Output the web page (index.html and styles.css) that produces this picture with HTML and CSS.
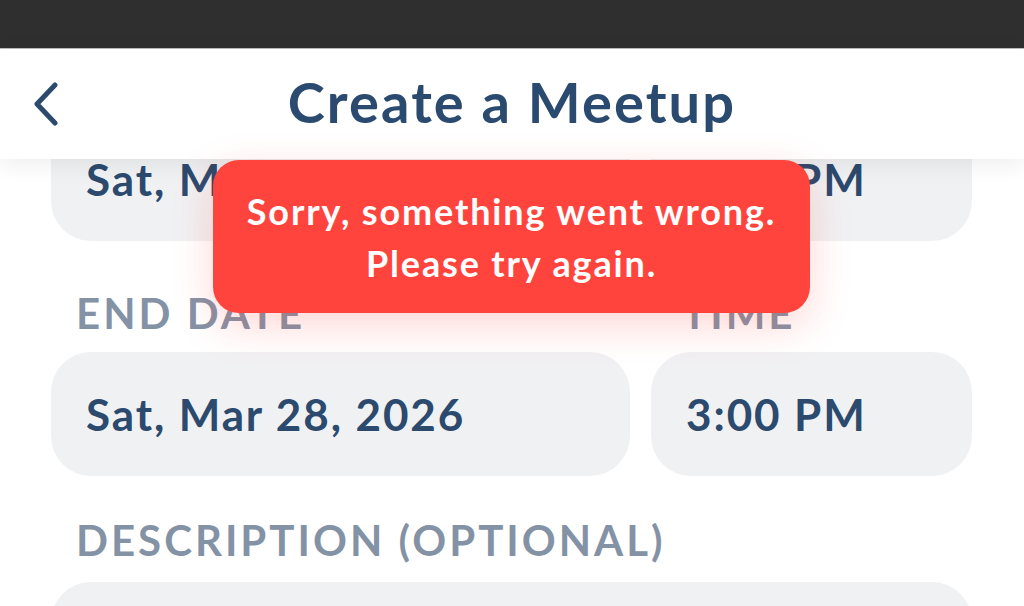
FILE: index.html
```html
<!DOCTYPE html>
<html lang="en">
<head>
<meta charset="utf-8">
<title>Create a Meetup</title>
<link rel="stylesheet" href="styles.css">
</head>
<body>
<div class="screen">
  <div class="status-bar"></div>
  <header class="app-header">
    <button class="back" aria-label="Back">
      <svg width="30" height="48" viewBox="0 0 30 48"><polyline points="21,3 3,22 21,41" fill="none" stroke="#2c4a6e" stroke-width="5" stroke-linecap="round" stroke-linejoin="round"/></svg>
    </button>
    <h1 class="title">Create a Meetup</h1>
  </header>
  <main class="scroll">
    <form class="form">
      <div class="row">
        <div class="field field-date">Sat, Mar 28, 2026</div>
        <div class="field field-time">1:00 PM</div>
      </div>
      <div class="row labels">
        <div class="label label-date">END DATE</div>
        <div class="label label-time">TIME</div>
      </div>
      <div class="row">
        <div class="field field-date">Sat, Mar 28, 2026</div>
        <div class="field field-time">3:00 PM</div>
      </div>
      <div class="label label-desc">DESCRIPTION (OPTIONAL)</div>
      <div class="field field-desc"></div>
    </form>
  </main>
  <div class="toast" role="alert">Sorry, something went wrong.<br>Please try again.</div>
</div>
</body>
</html>
```
FILE: styles.css
```css
* { box-sizing: border-box; }
html, body { margin: 0; padding: 0; }
body {
  width: 1024px;
  height: 606px;
  overflow: hidden;
  background: #ffffff;
  font-family: "Lato", "Noto Sans", sans-serif;
  color: #2c4a6e;
}
.screen {
  position: relative;
  width: 1024px;
  height: 606px;
  overflow: hidden;
  display: flex;
  flex-direction: column;
}
.status-bar {
  height: 49px;
  background: #2f2f2f;
  flex: none;
  border-bottom: 1px solid #bdbdbd;
}
.app-header {
  position: relative;
  z-index: 2;
  height: 110px;
  flex: none;
  background: #ffffff;
  display: flex;
  align-items: center;
  justify-content: center;
  box-shadow: 0 6px 22px rgba(0, 0, 0, 0.07);
}
.back {
  position: absolute;
  left: 34px;
  top: 33px;
  background: none;
  border: 0;
  padding: 0;
  width: 30px;
  height: 48px;
}
.back svg { display: block; }
.title {
  margin: 0;
  font-size: 56px;
  font-weight: 700;
  color: #2b4a6f;
  letter-spacing: 2.1px;
  line-height: 1;
  transform: translateY(-2px);
}
.scroll {
  flex: 1;
  overflow: hidden;
  position: relative;
  z-index: 1;
}
.form {
  margin-top: -42px;
  padding: 0 52px 0 51px;
}
.row {
  display: flex;
  gap: 21px;
}
.field {
  height: 124px;
  border-radius: 40px;
  background: #f0f1f3;
  display: flex;
  align-items: center;
  padding-left: 35px;
  font-size: 44px;
  font-weight: 700;
  color: #2c4a6e;
  letter-spacing: 1.9px;
}
.field-date { width: 579px; flex: none; }
.field-time { flex: 1; }
.labels { margin-top: 47px; margin-bottom: 14px; }
.label {
  font-size: 42px;
  line-height: 50px;
  font-weight: 700;
  color: #8492a6;
  padding-left: 25px;
  letter-spacing: 3px;
}
.label-date { width: 579px; flex: none; }
.label-time { padding-left: 31px; }
.label-desc { margin-top: 39px; margin-bottom: 17px; }
.field-desc { height: 160px; }
.toast {
  position: absolute;
  z-index: 5;
  left: 213px;
  top: 160px;
  width: 597px;
  height: 153px;
  border-radius: 26px;
  background: #ff443d;
  color: #ffffff;
  font-size: 36px;
  font-weight: 700;
  line-height: 52px;
  text-align: center;
  padding-top: 25px;
  letter-spacing: 1.85px;
  box-shadow: 0 12px 40px rgba(255, 68, 61, 0.22);
}
```
